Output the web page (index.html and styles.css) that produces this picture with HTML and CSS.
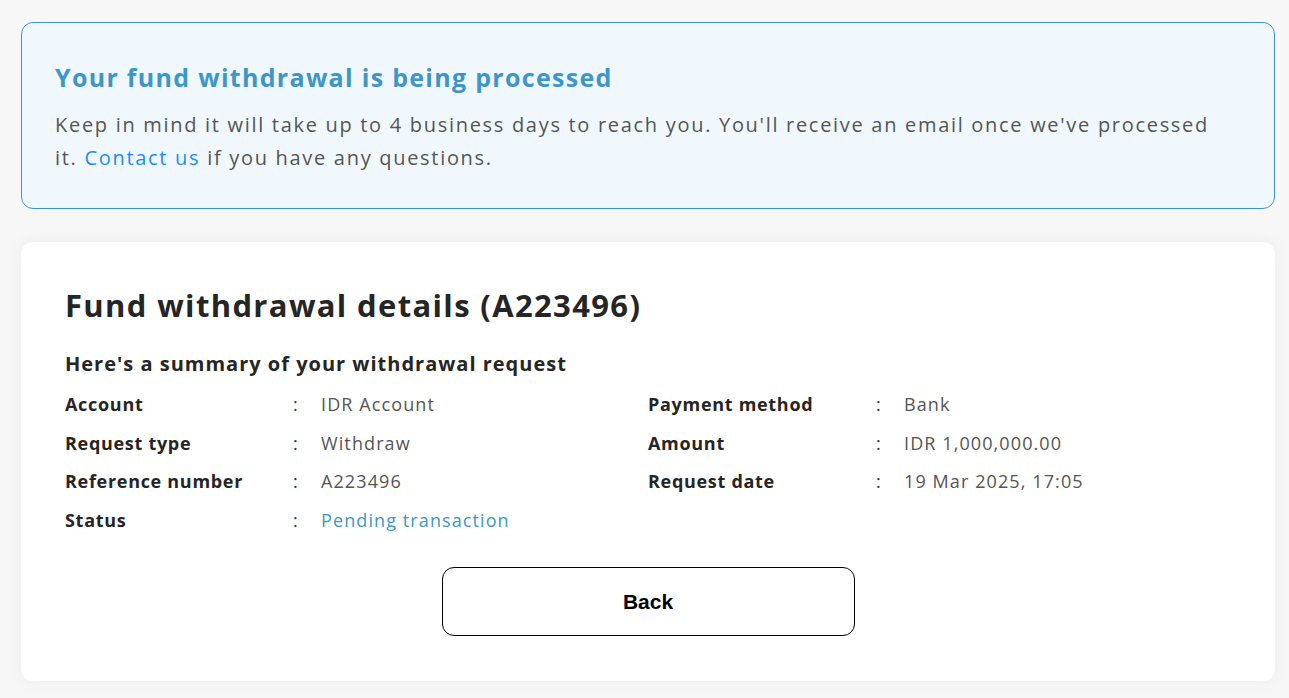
FILE: index.html
```html
<!DOCTYPE html>
<html lang="en">
<head>
<meta charset="utf-8">
<title>Fund withdrawal details</title>
<link rel="stylesheet" href="styles.css">
</head>
<body>
<main class="page">
  <section class="notice">
    <h2 class="notice-title">Your fund withdrawal is being processed</h2>
    <p class="notice-text">Keep in mind it will take up to 4 business days to reach you. You'll receive an email once we've processed it. <a class="link" href="#">Contact us</a> if you have any questions.</p>
  </section>
  <section class="card">
    <h1 class="card-title">Fund withdrawal details (A223496)</h1>
    <h3 class="summary-title">Here's a summary of your withdrawal request</h3>
    <div class="details">
      <div class="col">
        <div class="row"><span class="label">Account</span><span class="colon">:</span><span class="value">IDR Account</span></div>
        <div class="row"><span class="label">Request type</span><span class="colon">:</span><span class="value">Withdraw</span></div>
        <div class="row"><span class="label">Reference number</span><span class="colon">:</span><span class="value">A223496</span></div>
        <div class="row"><span class="label">Status</span><span class="colon">:</span><span class="value status">Pending transaction</span></div>
      </div>
      <div class="col">
        <div class="row"><span class="label">Payment method</span><span class="colon">:</span><span class="value">Bank</span></div>
        <div class="row"><span class="label">Amount</span><span class="colon">:</span><span class="value">IDR 1,000,000.00</span></div>
        <div class="row"><span class="label">Request date</span><span class="colon">:</span><span class="value">19 Mar 2025, 17:05</span></div>
      </div>
    </div>
    <div class="actions">
      <button class="btn-back" type="button">Back</button>
    </div>
  </section>
</main>
</body>
</html>
```
FILE: styles.css
```css
* { box-sizing: border-box; }
html, body { margin: 0; padding: 0; }
body {
  background: #f7f7f7;
  font-family: "Open Sans", "Noto Sans", sans-serif;
  color: #555;
}
.page {
  padding: 22px 14px 17px 21px;
  display: flex;
  flex-direction: column;
  gap: 33px;
}
.notice {
  background: #f0f8fe;
  border: 1px solid #3b97cf;
  border-radius: 12px;
  padding: 36px 50px 34px 33px;
}
.notice-title {
  margin: 0 0 13px;
  font-size: 25px;
  line-height: 36px;
  font-weight: 700;
  letter-spacing: 1.3px;
  color: #3d96c9;
}
.notice-text {
  margin: 0;
  font-size: 20px;
  line-height: 33px;
  letter-spacing: 1.7px;
  color: #555;
}
.link { color: #1a8cff; text-decoration: none; }
.card {
  background: #fff;
  border-radius: 12px;
  box-shadow: 0 0 16px rgba(0,0,0,0.05);
  padding: 42px 44px 45px;
}
.card-title {
  margin: 0 0 23px;
  font-size: 31px;
  line-height: 42px;
  font-weight: 700;
  letter-spacing: 1.35px;
  color: #252525;
}
.summary-title {
  margin: 0 0 6px;
  font-size: 20px;
  line-height: 30px;
  font-weight: 700;
  letter-spacing: 1px;
  color: #252525;
}
.details {
  display: grid;
  grid-template-columns: 583px 1fr;
}
.row {
  display: grid;
  grid-template-columns: 228px 28px 1fr;
  font-size: 18px;
  line-height: 38.5px;
}
.label { font-weight: 700; color: #252525; letter-spacing: 0.7px; }
.colon { color: #333; }
.value { color: #555; letter-spacing: 1.1px; }
.status { color: #3d96c9; }
.actions {
  display: flex;
  justify-content: center;
  margin-top: 28px;
}
.btn-back {
  width: 413px;
  height: 69px;
  background: #fff;
  border: 1px solid #000;
  border-radius: 12px;
  font-family: "Liberation Sans", Arial, sans-serif;
  font-size: 21px;
  font-weight: 700;
  color: #000;
  cursor: pointer;
}
```
